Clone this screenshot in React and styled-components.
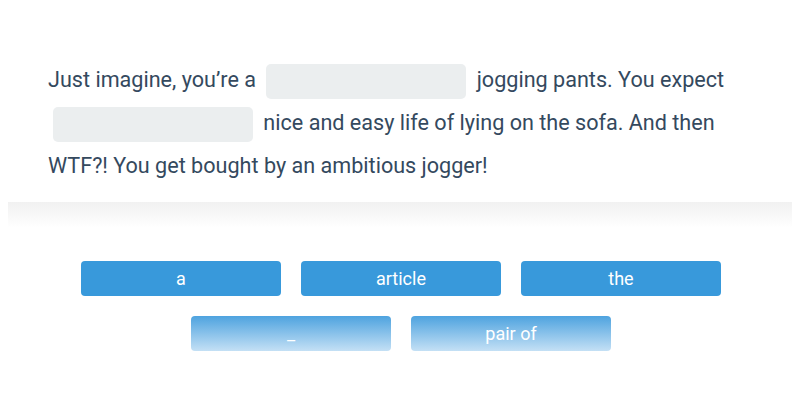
import React from 'react'
import styled, { createGlobalStyle } from 'styled-components'

const GlobalStyle = createGlobalStyle`
  body {
    margin: 8px;
    background: #fff;
    font-family: Roboto, "Liberation Sans", sans-serif;
  }
`

const parts = [
  { text: 'Just imagine, you’re a ' },
  { blank: true },
  { text: ' jogging pants. You expect ' },
  { blank: true },
  { text: ' nice and easy life of lying on the sofa. And then WTF?! You get bought by an ambitious jogger!' },
]

const options = [
  ['a', 'article', 'the'],
  ['_', 'pair of'],
]

function App() {
  return (
    <>
      <GlobalStyle />
      <Card>
        <Sentence>
          {parts.map((p, i) =>
            p.blank ? <Blank key={i} /> : <span key={i}>{p.text}</span>
          )}
        </Sentence>
      </Card>
      <CardShadow />
      <Options>
        {options.map((row, r) => (
          <OptionRow key={r}>
            {row.map((o) => (
              <Option key={o} faded={r === 1}>{o}</Option>
            ))}
          </OptionRow>
        ))}
      </Options>
    </>
  )
}

export default App

const Card = styled.div`
  background: #fff;
  padding: 52px 40px 16px;
`

const Sentence = styled.p`
  margin: 0;
  font-size: 21.6px;
  line-height: 40px;
  color: #34495e;
`

const Blank = styled.span`
  display: inline-block;
  width: 200px;
  height: 35px;
  margin: 4px 5px;
  vertical-align: middle;
  background: #ebeeef;
  border-radius: 5px;
`

const CardShadow = styled.div`
  height: 26px;
  background: linear-gradient(#f1f1f1, #fff);
`

const Options = styled.div`
  display: flex;
  flex-direction: column;
  align-items: center;
  gap: 20px;
  padding: 33px 0 0 2px;
`

const OptionRow = styled.div`
  display: flex;
  gap: 20px;
`

const Option = styled.button`
  width: 200px;
  height: 35px;
  border: none;
  border-radius: 4px;
  padding: 0;
  font-family: Roboto, "Liberation Sans", sans-serif;
  font-size: 18px;
  color: #fff;
  background: ${(p) => (p.faded ? 'linear-gradient(#4ea3df, #c4e0f5)' : '#3899db')};
`
